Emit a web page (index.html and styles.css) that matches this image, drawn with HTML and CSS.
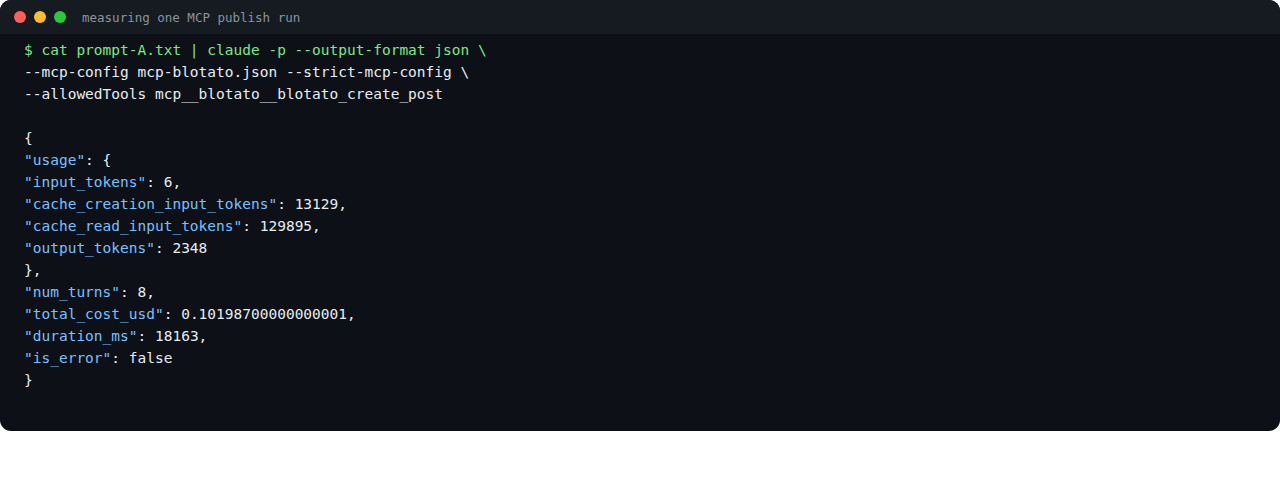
FILE: index.html
```html
<!DOCTYPE html>
<html>
<head>
<meta charset="utf-8">
<link rel="stylesheet" href="styles.css">
</head>
<body>
<div class="window">
  <div class="titlebar">
    <span class="dot red"></span>
    <span class="dot yellow"></span>
    <span class="dot green"></span>
    <span class="title">measuring one MCP publish run</span>
  </div>
  <pre class="term"><span class="cmd">$ cat prompt-A.txt | claude -p --output-format json \</span>
--mcp-config mcp-blotato.json --strict-mcp-config \
--allowedTools mcp__blotato__blotato_create_post

{
<span class="key">"usage"</span>: {
<span class="key">"input_tokens"</span>: 6,
<span class="key">"cache_creation_input_tokens"</span>: 13129,
<span class="key">"cache_read_input_tokens"</span>: 129895,
<span class="key">"output_tokens"</span>: 2348
},
<span class="key">"num_turns"</span>: 8,
<span class="key">"total_cost_usd"</span>: 0.10198700000000001,
<span class="key">"duration_ms"</span>: 18163,
<span class="key">"is_error"</span>: false
}</pre>
</div>
</body>
</html>
```

FILE: styles.css
```css
html, body {
  margin: 0;
  padding: 0;
  background: #ffffff;
}
.window {
  width: 1280px;
  height: 431px;
  background: #0d1117;
  border-radius: 11px;
  overflow: hidden;
  display: flex;
  flex-direction: column;
}
.titlebar {
  height: 34px;
  flex: none;
  background: #161b22;
  display: flex;
  align-items: center;
  padding-left: 14px;
  gap: 8px;
  box-sizing: border-box;
}
.dot {
  width: 12px;
  height: 12px;
  border-radius: 50%;
  display: block;
}
.red { background: #ff5f57; }
.yellow { background: #febc2e; }
.green { background: #28c840; }
.title {
  margin-left: 8px;
  font-family: "DejaVu Sans Mono", monospace;
  font-size: 12.5px;
  color: #8b949e;
}
.term {
  margin: 0;
  padding: 5px 24px 0;
  font-family: "DejaVu Sans Mono", monospace;
  font-size: 14.5px;
  line-height: 22px;
  color: #e6edf3;
}
.cmd { color: #7ee787; }
.key { color: #79c0ff; }
```
